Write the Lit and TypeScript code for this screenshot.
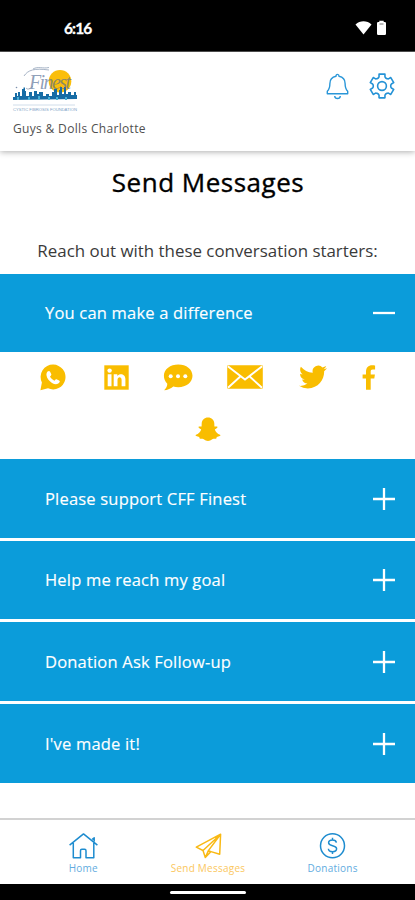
import { LitElement, html, svg, css } from "lit";
import { customElement } from "lit/decorators.js";

const GEAR_POINTS = (() => {
  // Six-toothed cog outline: outer and inner radii alternate around the centre.
  const out: string[] = [];
  for (let i = 0; i < 6; i++) {
    const a = i * 60 - 90;
    const steps: [number, number][] = [[-14, 12.2], [14, 12.2], [18, 9.6], [25, 8.8], [35, 8.8], [42, 9.6]];
    for (const [da, r] of steps) {
      const t = ((a + da) * Math.PI) / 180;
      out.push(`${(13 + r * Math.cos(t)).toFixed(2)},${(13 + r * Math.sin(t)).toFixed(2)}`);
    }
  }
  return out.join(" ");
})();

const shareIcons = [
  { cls: "whatsapp", w: 26, h: 27, art: svg`
    <path fill="#f9bd00" d="M13.300.6A12.400 12.400 0 1 1 8 24.300L.4 26.300 1.900 18.500A12.400 12.400 0 0 1 13.300.6Z"/>
    <path fill="#fff" d="M7.600 7.600c.9-1 2-.9 2.500.1l1.100 2.300c.3.7.1 1.200-.4 1.700l-.8.8c.8 1.700 2.300 3.200 4.400 4.200l1-1c.5-.5 1-.6 1.600-.3l2.100 1.100c.9.5.9 1.300.2 2.100-1.600 2-4.400 2-7.300.3-3-1.800-5.200-4.700-5.500-7.600-.2-1.500.2-2.700 1.100-3.700Z"/>` },
  { cls: "linkedin", w: 25, h: 25, art: svg`
    <path fill="#f9bd00" d="M.3.3h24.400v24.400H.3Z"/>
    <circle cx="5.600" cy="5.600" r="2.200" fill="#fff"/>
    <path fill="#fff" d="M3.700 9.300h3.800v12H3.700ZM9.700 9.300h3.600v1.700c2.100-3 8.100-2.600 8.100 3.100v7.200h-3.800v-6.400c0-3.700-4.100-3.300-4.100 0v6.400H9.700Z"/>` },
  { cls: "bubble", w: 30, h: 27, art: svg`
    <path fill="#f9bd00" d="M15.300.5c8 0 14.200 4.800 14.200 11.200s-6.200 11.500-14.200 11.500c-1.900 0-3.500-.2-5-.7-2.500 2-5.600 3.700-9.200 3.800 2-1.900 3.200-4.100 3.200-6.600C2.100 17.600.9 14.700.9 11.700.9 5.300 7.300.5 15.300.5Z"/>
    <g fill="#fff"><circle cx="7.700" cy="12.300" r="2"/><circle cx="15" cy="12.300" r="2"/><circle cx="22.300" cy="12.300" r="2"/></g>` },
  { cls: "mail", w: 36, h: 24, art: svg`
    <rect x=".2" y=".3" width="35.600" height="23.400" rx="1" fill="#f9bd00"/>
    <path fill="none" stroke="#fff" stroke-width="1.900" d="m.8 1.200 17.200 13.300L35.200 1.200M1 22.800l12.600-11.500M35 22.800 22.400 11.300"/>` },
  { cls: "twitter", w: 28, h: 24, box: "0 2 24 20", art: svg`
    <path fill="#f9bd00" d="M23.953 4.570a10 10 0 0 1-2.825.775 4.958 4.958 0 0 0 2.163-2.723c-.951.555-2.005.959-3.127 1.184a4.920 4.920 0 0 0-8.384 4.482C7.690 8.095 4.067 6.130 1.640 3.162a4.822 4.822 0 0 0-.666 2.475c0 1.710.870 3.213 2.188 4.096a4.904 4.904 0 0 1-2.228-.616v.060a4.923 4.923 0 0 0 3.946 4.827 4.996 4.996 0 0 1-2.212.085 4.936 4.936 0 0 0 4.604 3.417 9.867 9.867 0 0 1-6.102 2.105c-.390 0-.779-.023-1.170-.067a13.995 13.995 0 0 0 7.557 2.209c9.053 0 13.998-7.496 13.998-13.985 0-.210 0-.420-.015-.630A9.935 9.935 0 0 0 24 4.590Z"/>` },
  { cls: "facebook", w: 14, h: 26, art: svg`
    <path fill="#f9bd00" d="M4 24.800V13.600H.6V9.600H4V6.600C4 2.500 6.300.2 10.100.2c1.400 0 2.500.1 3 .2v4.100H10.800C9.100 4.500 8.700 5.400 8.700 6.700v2.900h4.200l-.6 4H8.700v11.200Z"/>` },
];

const snapchat = svg`
  <path fill="#f9bd00" d="M12.800.5c3.700 0 6 2.500 6.300 5.800l.1 3.100c.8.3 1.800-.3 2.700.2 1 .7.200 1.800-2.300 2.900.8 2.600 2.800 4.400 5.200 5.200.6.300.5 1-.2 1.400l-3 .9-.6 1.700c-1.500.1-2.600-.2-4 .6-1.500 1.100-2.600 1.700-4.200 1.700s-2.700-.6-4.200-1.700c-1.400-.8-2.500-.5-4-.6L4 20l-3-.9c-.7-.4-.8-1.100-.2-1.400 2.400-.8 4.400-2.600 5.200-5.200-2.500-1.100-3.300-2.200-2.300-2.900.9-.5 1.900.1 2.700-.2l.1-3.100C6.800 3 9.100.5 12.800.5Z"/>`;

const starters = ["Please support CFF Finest", "Help me reach my goal", "Donation Ask Follow-up", "I've made it!"];

const tabs = [
  { label: "Home", active: false, art: svg`<path d="M.6 12.200 14.500.9 28.400 12.200M4.300 10v14.700h7.200v-7q0-1.400 1.400-1.400h2.700q1.400 0 1.400 1.400v7H24.800V10M23.200 6.400l2-1.600v3.600"/>` },
  { label: "Send Messages", active: true, art: svg`<path d="M26.600 1.200 2.300 14.200l6.700 3.300L26.600 1.200l-.9 20.100-8.700-2.700M26.600 1.200 14.400 17.600M9 17.500l2.300 7 5.700-5.900-2.600-1-3.100 6.900"/>` },
  { label: "Donations", active: false, art: svg`<circle cx="14.500" cy="12.800" r="12"/><path d="M18.400 9.700c-.3-1.800-1.700-2.700-3.900-2.700-2.300 0-3.900 1-3.900 2.800 0 4 8 1.800 8 6 0 1.800-1.700 2.900-4.100 2.900s-4-1-4.100-2.900M14.500 4.800V7M14.500 18.700v2.200"/>` },
];

@customElement("app-root")
export class AppRoot extends LitElement {
  static styles = css`
    :host { display: flex; flex-direction: column; width: 415px; height: 900px; overflow: hidden; background: #fff; font-family: "Open Sans", "Noto Sans", sans-serif; color: #111; }
    svg { display: block; flex: none; }
    .status { height: 52px; flex: none; box-sizing: border-box; background: #000; color: #fff; display: flex; align-items: center; justify-content: space-between; padding: 5px 28px 0 64px; border-bottom: 1px solid #555; }
    .clock { font: 700 15.500px/20px Lato, sans-serif; letter-spacing: -.9px; -webkit-text-stroke: .3px #fff; }
    .header { height: 99px; flex: none; box-sizing: border-box; display: flex; justify-content: space-between; padding: 12px 20px 0 12px; box-shadow: 0 1px 6px rgba(0,0,0,.32); }
    .team { margin: 8px 0 0 1px; font-size: 12px; letter-spacing: .33px; line-height: 17px; color: #505050; white-space: nowrap; }
    .script { font: italic 20px "Liberation Serif", serif; }
    .tiny { font: 4.200px "Liberation Sans", sans-serif; }
    .actions { display: flex; gap: 20px; padding-top: 9px; }
    h1 { margin: 13px 0 0; text-align: center; font-size: 26px; letter-spacing: .5px; text-indent: 1px; font-weight: 500; line-height: 36px; color: #000; -webkit-text-stroke: .35px #000; }
    .intro { margin: 39px 0 0; text-align: center; font-size: 16.900px; line-height: 24px; color: #3a3a3a; white-space: nowrap; }
    .bar { height: 78.500px; display: flex; align-items: center; justify-content: space-between; padding: 1px 19px 0 45px; background: #0b9cda; color: #fff; font-size: 16.500px; letter-spacing: .19px; line-height: 24px; box-sizing: border-box; -webkit-text-stroke: .15px #fff; }
    .bar.open { margin-top: 10.500px; }
    .list { display: flex; flex-direction: column; gap: 3.200px; }
    .share { height: 107px; box-sizing: border-box; padding-top: 12px; }
    .row { display: flex; align-items: flex-start; padding-left: 40px; height: 53px; }
    .linkedin { margin: 1px 0 0 38px; }
    .bubble { margin-left: 34px; }
    .mail { margin: 1px 0 0 34px; }
    .twitter { margin: 1px 0 0 36px; }
    .facebook { margin: 1px 0 0 35px; }
    .last { display: flex; justify-content: center; }
    .nav { margin-top: auto; height: 65.500px; flex: none; box-sizing: border-box; border-top: 2px solid #d2d2d2; display: flex; padding: 12.500px 20px 0 21px; }
    .tab { flex: 1; display: flex; flex-direction: column; align-items: center; color: #62ace0; font-size: 10px; letter-spacing: .24px; line-height: 14px; gap: 2px; white-space: nowrap; }
    .tab svg { fill: none; stroke: #1e8ccf; stroke-width: 1.500; stroke-linejoin: round; }
    .tab.active { color: #fbc75e; }
    .tab.active svg { stroke: #f9b914; }
    .home-area { height: 16.500px; flex: none; background: #000; display: flex; justify-content: center; align-items: center; }
    .pill { width: 76px; height: 3px; border-radius: 2px; background: #fff; margin-top: 1px; }
  `;

  private toggle(open: boolean) {
    return html`<svg width="24" height="24" viewBox="0 0 24 24"><path d=${open ? "M1 12h22" : "M1 12h22M12 1v22"} stroke="#fff" stroke-width="2.300" fill="none"/></svg>`;
  }

  render() {
    return html`
      <div class="status">
        <span class="clock">6:16</span>
        <svg width="32" height="16" viewBox="0 0 32 16" fill="#fff"><path d="M.5 4.500C5 .2 12 .2 16.500 4.500L8.500 14.500Z"/><path d="M24.300 2V.8h4.400V2h1.100q1.200 0 1.200 1.200v10.600q0 1.200-1.200 1.200h-6.600q-1.200 0-1.200-1.200V3.200Q22 2 23.200 2Z"/><path d="M24.500 4h4" stroke="#777"/></svg>
      </div>
      <div class="header">
        <div>
          <svg width="68" height="48" viewBox="0 0 68 48">
            <circle cx="48" cy="17.200" r="11.300" fill="#fabe0b"/>
            <path fill="#176ca5" d="M1 36v-3h2v-4h2v3h1v-4h2v4h2v-7h1.500v-1.500H13V27h1v5h3v-4h3v4h2v-5h3v3h2v-2h4v4h3v-2h3v2h3v-4h2v-3h3v6h2v-5h1v-3h2v7h2v-7h2v7h2v-2h3v3h3v-3h2v3h1v4Z"/>
            <path d="M6 36v-3M17 36v-3M27 36v-4M37 36v-3M45 36v-3M54 36v-3" stroke="#48b0d7" stroke-width="2"/>
            <text class="script" x="17" y="24.500" fill="#506a91" fill-opacity=".65" textLength="42">Finest</text>
            <path d="M12 12c4-6 10-8 25-6M21 5c5-3 10 0 16-1.500M21 22c-3 3-5 4-7 2" fill="none" stroke="#8194ad" stroke-width=".7"/>
            <circle cx="4.500" cy="23.500" r=".8" fill="#7c90ac"/>
            <path d="M1 41h62" stroke="#c4d4e5" stroke-width=".8"/>
            <text class="tiny" x="1" y="47" fill="#7e9fc6" textLength="64" lengthAdjust="spacingAndGlyphs">CYSTIC FIBROSIS FOUNDATION</text>
          </svg>
          <div class="team">Guys &amp; Dolls Charlotte</div>
        </div>
        <div class="actions">
          <svg width="23" height="27" viewBox="0 0 23 27" fill="none" stroke="#2996d8" stroke-width="1.400" stroke-linejoin="round"><path d="M10 3.200q0-1.800 1.500-1.800T13 3.200c4 .8 6.100 3.700 6.100 7.200 0 4.300.5 5.800 2.600 7.800v2.600H1.300v-2.600c2.100-2 2.600-3.500 2.600-7.800 0-3.500 2.100-6.400 6.100-7.200ZM8.700 23c.3 3.400 5.300 3.400 5.600 0"/></svg>
          <svg width="26" height="26" viewBox="0 0 26 26" fill="none" stroke="#2492d6" stroke-width="1.600" stroke-linejoin="round"><polygon points=${GEAR_POINTS}/><circle cx="13" cy="13" r="4.400"/></svg>
        </div>
      </div>
      <h1>Send Messages</h1>
      <p class="intro">Reach out with these conversation starters:</p>
      <div class="bar open"><span>You can make a difference</span>${this.toggle(true)}</div>
      <div class="share">
        <div class="row">${shareIcons.map((i) => html`<svg class=${i.cls} width=${i.w} height=${i.h} viewBox=${i.box ?? `0 0 ${i.w} ${i.h}`}>${i.art}</svg>`)}</div>
        <div class="last"><svg width="26" height="25" viewBox="0 0 25.600 25">${snapchat}</svg></div>
      </div>
      <div class="list">${starters.map((s) => html`<div class="bar"><span>${s}</span>${this.toggle(false)}</div>`)}</div>
      <div class="nav">${tabs.map((t) => html`<div class="tab ${t.active ? "active" : ""}"><svg width="29" height="26" viewBox="0 0 29 26">${t.art}</svg><span>${t.label}</span></div>`)}</div>
      <div class="home-area"><div class="pill"></div></div>
    `;
  }
}
